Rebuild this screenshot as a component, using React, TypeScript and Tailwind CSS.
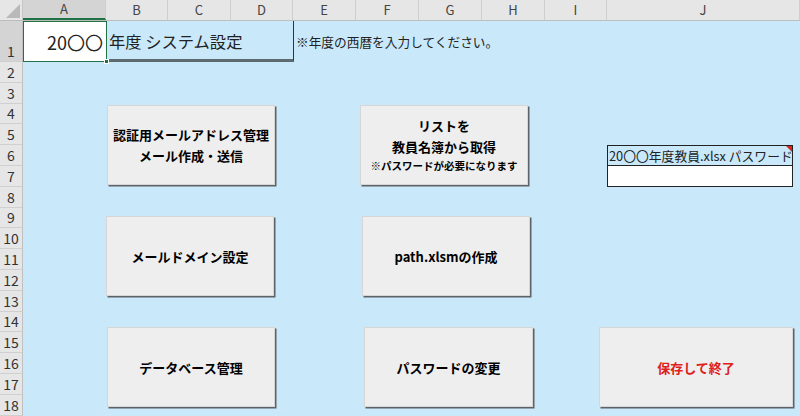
const cols = [
  { label: "A", w: 83 },
  { label: "B", w: 62 },
  { label: "C", w: 63 },
  { label: "D", w: 62 },
  { label: "E", w: 63 },
  { label: "F", w: 63 },
  { label: "G", w: 63 },
  { label: "H", w: 63 },
  { label: "I", w: 62 },
  { label: "J", w: 193 },
];

const rows = Array.from({ length: 18 }, (_, i) => i + 1);

function SheetButton({
  className,
  children,
}: {
  className: string;
  children: React.ReactNode;
}) {
  return (
    <div
      className={`flex h-[80px] shrink-0 flex-col items-center justify-center border border-[#d6d6d6] bg-[#eeeeee] text-[13px] font-bold leading-[21px] text-black shadow-[1.5px_1.5px_0_#5c6268] ${className}`}
    >
      {children}
    </div>
  );
}

export default function App() {
  return (
    <div className="h-[416px] w-[800px] overflow-hidden bg-[#c9e9fb] font-['Noto_Sans_CJK_JP',sans-serif]">
      {/* column header */}
      <div className="flex h-[21px] border-b border-[#bdbdbd] bg-[#e6e6e6]">
        <div className="flex w-[23px] shrink-0 items-end justify-end border-r border-[#c6c6c6] pb-[2px] pr-[2px]">
          <svg width="14" height="14" viewBox="0 0 14 14">
            <polygon points="14,0 14,14 0,14" fill="#b9b9b9" />
          </svg>
        </div>
        {cols.map((c) => (
          <div
            key={c.label}
            style={{ width: c.w }}
            className={`flex shrink-0 items-center justify-center border-r border-[#cfcfcf] text-[13px] text-[#444] ${
              c.label === "A" ? "bg-[#d4d4d4] border-b-2 border-b-[#217346]" : ""
            }`}
          >
            {c.label}
          </div>
        ))}
      </div>

      <div className="flex">
        {/* row header */}
        <div className="flex w-[23px] shrink-0 flex-col border-r border-[#c0c0c0] bg-[#e6e6e6]">
          {rows.map((r) => (
            <div
              key={r}
              className={`flex shrink-0 items-end justify-center border-b border-[#d0d0d0] pb-[1px] text-[14px] leading-[18px] text-[#333] ${
                r === 1 ? "h-[41px] bg-[#d4d4d4]" : "h-[20.8px]"
              }`}
            >
              {r}
            </div>
          ))}
        </div>

        {/* sheet */}
        <div className="flex-1">
          {/* row 1 */}
          <div className="flex h-[41px] items-stretch">
            <div className="relative flex w-[84px] shrink-0 items-center justify-end border border-[#217346] bg-white pr-[3px] pt-[1px] text-[18px] text-[#222]">
              20〇〇
              <div className="absolute -bottom-[3px] -right-[3px] h-[5px] w-[5px] border border-white bg-[#217346]" />
            </div>
            <div className="flex w-[187px] shrink-0 items-center border-b-[3px] border-r border-b-[#5d6b70] border-r-[#333] pl-[2px] pt-[2px] text-[16.3px] text-[#222]">
              年度 システム設定
            </div>
            <div className="flex items-center pl-[2px] pt-[1px] text-[12.7px] text-[#222]">
              ※年度の西暦を入力してください。
            </div>
          </div>

          <div className="pt-[43px]">
            <div className="flex h-[80px] items-start">
              <SheetButton className="ml-[84px] w-[168px]">
                <span>認証用メールアドレス管理</span>
                <span>メール作成・送信</span>
              </SheetButton>
              <SheetButton className="ml-[85px] w-[168px]">
                <span>リストを</span>
                <span>教員名簿から取得</span>
                <span className="text-[10.5px] leading-[18px]">※パスワードが必要になります</span>
              </SheetButton>
              <div className="ml-[79px] mt-[40px] flex w-[186px] shrink-0 flex-col border border-[#222]">
                <div className="relative flex h-[20px] items-center whitespace-nowrap border-b border-[#222] pl-[1px] text-[12.8px] text-[#222]">
                  20〇〇年度教員.xlsx パスワード
                  <svg className="absolute right-0 top-0" width="6" height="6" viewBox="0 0 6 6">
                    <polygon points="0,0 6,0 6,6" fill="#d9261c" />
                  </svg>
                </div>
                <div className="h-[20px] bg-white" />
              </div>
            </div>

            <div className="mt-[31px] flex h-[80px] items-start">
              <SheetButton className="ml-[83px] w-[168px]">
                <span>メールドメイン設定</span>
              </SheetButton>
              <SheetButton className="ml-[88px] w-[168px]">
                <span>path.xlsmの作成</span>
              </SheetButton>
            </div>

            <div className="mt-[31px] flex h-[80px] items-start">
              <SheetButton className="ml-[84px] w-[168px]">
                <span>データベース管理</span>
              </SheetButton>
              <SheetButton className="ml-[89px] w-[169px]">
                <span>パスワードの変更</span>
              </SheetButton>
              <SheetButton className="ml-[66px] w-[194px]">
                <span className="text-[#e0201b]">保存して終了</span>
              </SheetButton>
            </div>
          </div>
        </div>
      </div>
    </div>
  );
}
